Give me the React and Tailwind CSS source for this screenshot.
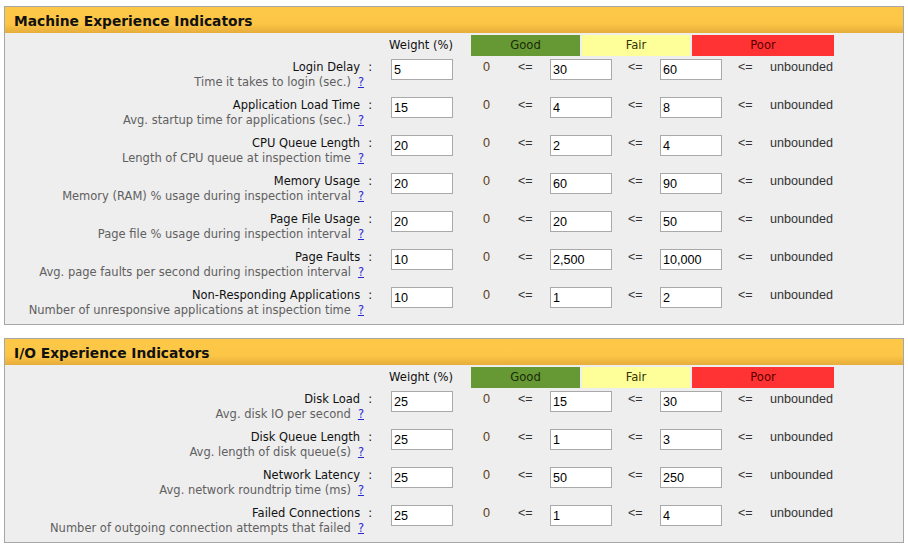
import React from "react";

const machine = [
  { label: "Login Delay", desc: "Time it takes to login (sec.)", weight: "5", fair: "30", poor: "60" },
  { label: "Application Load Time", desc: "Avg. startup time for applications (sec.)", weight: "15", fair: "4", poor: "8" },
  { label: "CPU Queue Length", desc: "Length of CPU queue at inspection time", weight: "20", fair: "2", poor: "4" },
  { label: "Memory Usage", desc: "Memory (RAM) % usage during inspection interval", weight: "20", fair: "60", poor: "90" },
  { label: "Page File Usage", desc: "Page file % usage during inspection interval", weight: "20", fair: "20", poor: "50" },
  { label: "Page Faults", desc: "Avg. page faults per second during inspection interval", weight: "10", fair: "2,500", poor: "10,000" },
  { label: "Non-Responding Applications", desc: "Number of unresponsive applications at inspection time", weight: "10", fair: "1", poor: "2" },
];

const io = [
  { label: "Disk Load", desc: "Avg. disk IO per second", weight: "25", fair: "15", poor: "30" },
  { label: "Disk Queue Length", desc: "Avg. length of disk queue(s)", weight: "25", fair: "1", poor: "3" },
  { label: "Network Latency", desc: "Avg. network roundtrip time (ms)", weight: "25", fair: "50", poor: "250" },
  { label: "Failed Connections", desc: "Number of outgoing connection attempts that failed", weight: "25", fair: "1", poor: "4" },
];

const Field = ({ value }) => (
  <input
    type="text"
    defaultValue={value}
    className="w-[62px] h-[21px] shrink-0 border border-[#a9a9a9] bg-white px-[2px] pt-[1px] text-[12.6px] text-black outline-none font-['Liberation_Sans',Arial,sans-serif]"
  />
);

const Row = ({ item }) => (
  <div className="flex items-start h-[38px] last:h-[37px]">
    <div className="w-[386px] shrink-0 text-right text-[11.5px] leading-[15px] pt-[1px] font-['DejaVu_Sans',Verdana,sans-serif]">
      <div className="pr-[19px] text-[#111111] whitespace-nowrap">
        {item.label}
        <span className="ml-[8px]">:</span>
      </div>
      <div className="pr-[27px] text-[#606060] whitespace-nowrap">
        {item.desc}
        <a href="#" className="ml-[7px] text-[#2a2ad0] underline">?</a>
      </div>
    </div>
    <Field value={item.weight} />
    <div className="flex items-start text-[12.6px] leading-[15px] pt-[1px] font-['Liberation_Sans',Arial,sans-serif] text-[#333333]">
      <span className="w-[47px] pl-[30px] text-[#5c3a14]">0</span>
      <span className="w-[50px] pl-[18px]">&lt;=</span>
    </div>
    <Field value={item.fair} />
    <div className="w-[48px] pl-[16px] text-[12.6px] leading-[15px] pt-[1px] font-['Liberation_Sans',Arial,sans-serif] text-[#333333]">&lt;=</div>
    <Field value={item.poor} />
    <div className="w-[48px] pl-[16px] text-[12.6px] leading-[15px] pt-[1px] font-['Liberation_Sans',Arial,sans-serif] text-[#333333]">&lt;=</div>
    <div className="text-[12.6px] leading-[15px] pt-[1px] font-['Liberation_Sans',Arial,sans-serif] text-[#333333]">unbounded</div>
  </div>
);

const Panel = ({ title, rows, className }) => (
  <div className={`mx-[4px] border border-[#a6a6a6] bg-[#eeeeee] ${className}`}>
    <div className="h-[26px] pl-[9px] bg-[linear-gradient(to_bottom,#fdc848_0%,#fcc545_65%,#e5ad3b_100%)] text-[13.8px] leading-[28px] font-bold text-[#111111] font-['DejaVu_Sans',Verdana,sans-serif]">
      {title}
    </div>
    <div className="flex items-center h-[21px] mt-[2px] text-[11.6px] font-['DejaVu_Sans',Verdana,sans-serif]">
      <div className="w-[384px] shrink-0" />
      <div className="w-[82px] text-[#111111]">Weight (%)</div>
      <div className="w-[109px] h-full flex items-center justify-center bg-[#669933] text-[#1a2a0a]">Good</div>
      <div className="w-[108px] h-full ml-[2px] flex items-center justify-center bg-[#ffff99] text-[#333300]">Fair</div>
      <div className="w-[142px] h-full ml-[2px] flex items-center justify-center bg-[#ff3333] text-[#5a0000]">Poor</div>
    </div>
    <div className="mt-[3px]">
      {rows.map((item, index) => (
        <Row item={item} key={index} />
      ))}
    </div>
  </div>
);

const App = () => {
  return (
    <div className="w-[908px] h-[548px] bg-white pt-[6px] overflow-hidden">
      <Panel title="Machine Experience Indicators" rows={machine} />
      <Panel title="I/O Experience Indicators" rows={io} className="mt-[13px]" />
    </div>
  );
};

export default App;
